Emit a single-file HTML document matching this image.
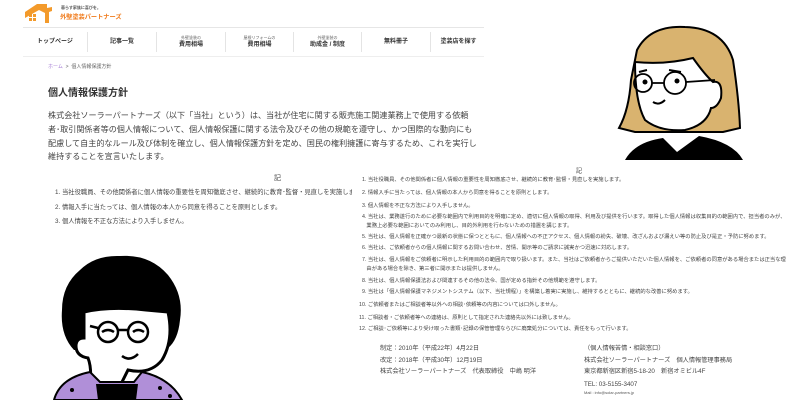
<!DOCTYPE html>
<html><head><meta charset="utf-8"><style>
*{margin:0;padding:0;box-sizing:border-box}
body{width:800px;height:400px;overflow:hidden;background:#fff;position:relative;font-family:"Liberation Sans","Noto Sans CJK JP",sans-serif;color:#333}
.a{position:absolute;white-space:nowrap}
.nav{position:absolute;top:30px;height:24px;text-align:center;font-size:6px;color:#333;font-weight:bold;display:flex;flex-direction:column;justify-content:center;line-height:9px}
.nav small{font-size:4px;font-weight:normal;color:#666;line-height:6px}
.div{position:absolute;top:32px;width:1px;height:20px;background:#e4e4e4}
.r{position:absolute;left:362px;font-size:5.3px;color:#444;white-space:nowrap;line-height:9px}
</style></head><body>
<svg class="a" style="left:25px;top:4px" width="28" height="19" viewBox="0 0 28 19">
<path d="M0 8 L12 0 L22 0 L22 4 L27 3 L27 7 L24 8 L24 19 L20 19 L20 9 L14 6 L0 14Z" fill="#f39a2b"/>
<rect x="4" y="10" width="3" height="3" fill="#f39a2b"/><rect x="8" y="10" width="3" height="3" fill="#f39a2b"/>
<rect x="4" y="14" width="3" height="3" fill="#f39a2b"/><rect x="8" y="14" width="3" height="3" fill="#f39a2b"/>
</svg>
<div class="a" style="left:61px;top:5px;font-size:4px;color:#555;font-weight:bold">暮らす家族に喜びを。</div>
<div class="a" style="left:60px;top:12px;font-size:6.2px;color:#f07a1a;font-weight:bold">外壁塗装パートナーズ</div>
<div class="a" style="left:23px;top:27px;width:461px;height:1px;background:#e6e6e6"></div>
<div class="a" style="left:23px;top:56px;width:461px;height:1px;background:#eee"></div>
<div class="nav" style="left:23px;width:64px">トップページ</div>
<div class="nav" style="left:88px;width:68px">記事一覧</div>
<div class="nav" style="left:157px;width:68px"><small>外壁塗装の</small>費用相場</div>
<div class="nav" style="left:226px;width:67px"><small>屋根リフォームの</small>費用相場</div>
<div class="nav" style="left:294px;width:67px"><small>外壁塗装の</small>助成金 / 制度</div>
<div class="nav" style="left:362px;width:68px">無料冊子</div>
<div class="nav" style="left:431px;width:55px">塗装店を探す</div>
<div class="div" style="left:87px"></div><div class="div" style="left:156px"></div><div class="div" style="left:225px"></div><div class="div" style="left:293px"></div><div class="div" style="left:361px"></div><div class="div" style="left:430px"></div>
<div class="a" style="left:48px;top:63px;font-size:5px;color:#666"><span style="color:#a77fd6">ホーム</span> &nbsp;&gt;&nbsp; 個人情報保護方針</div>
<div class="a" style="left:48px;top:84px;font-size:10px;font-weight:bold;color:#333">個人情報保護方針</div>
<div class="a" style="left:48px;top:109px;font-size:8.1px;line-height:13.8px;color:#444">株式会社ソーラーパートナーズ（以下「当社」という）は、当社が住宅に関する販売施工関連業務上で使用する依頼<br>者･取引関係者等の個人情報について、個人情報保護に関する法令及びその他の規範を遵守し、かつ国際的な動向にも<br>配慮して自主的なルール及び体制を確立し、個人情報保護方針を定め、国民の権利擁護に寄与するため、これを実行し<br>維持することを宣言いたします。</div>
<div class="a" style="left:274px;top:173px;font-size:7px;color:#444">記</div>
<div class="a" style="left:55px;top:186px;width:297px;overflow:hidden;font-size:6.3px;line-height:14.5px;color:#444">1. 当社役職員、その他関係者に個人情報の重要性を周知徹底させ、継続的に教育･監督・見直しを実施します。<br>2. 情報入手に当たっては、個人情報の本人から同意を得ることを原則とします。<br>3. 個人情報を不正な方法により入手しません。</div>
<div class="a" style="left:576px;top:166px;font-size:6px;color:#444">記</div>
<div class="r" style="top:176px">1. 当社役職員、その他関係者に個人情報の重要性を周知徹底させ、継続的に教育･監督・見直しを実施します。</div>
<div class="r" style="top:189px">2. 情報入手に当たっては、個人情報の本人から同意を得ることを原則とします。</div>
<div class="r" style="top:202px">3. 個人情報を不正な方法により入手しません。</div>
<div class="r" style="top:213px">4. 当社は、業務遂行のために必要な範囲内で利用目的を明確に定め、適切に個人情報の取得、利用及び提供を行います。取得した個人情報は収集目的の範囲内で、担当者のみが、<br>&nbsp;&nbsp;&nbsp;業務上必要な範囲においてのみ利用し、目的外利用を行わないための措置を講じます。</div>
<div class="r" style="top:233px">5. 当社は、個人情報を正確かつ最新の状態に保つとともに、個人情報への不正アクセス、個人情報の紛失、破壊、改ざんおよび漏えい等の防止及び是正・予防に努めます。</div>
<div class="r" style="top:244px">6. 当社は、ご依頼者からの個人情報に関するお問い合わせ、苦情、開示等のご請求に誠実かつ迅速に対応します。</div>
<div class="r" style="top:256px">7. 当社は、個人情報をご依頼者に明示した利用目的の範囲内で取り扱います。また、当社はご依頼者からご提供いただいた個人情報を、ご依頼者の同意がある場合または正当な理<br>&nbsp;&nbsp;&nbsp;由がある場合を除き、第三者に開示または提供しません。</div>
<div class="r" style="top:277px">8. 当社は、個人情報保護法および関連するその他の法令、国が定める指針その他規範を遵守します。</div>
<div class="r" style="top:288px">9. 当社は「個人情報保護マネジメントシステム（以下、当社規程）」を構築し着実に実施し、維持するとともに、継続的な改善に努めます。</div>
<div class="r" style="top:301px;left:359px">10. ご依頼者またはご相談者等以外への相談･依頼等の内容については口外しません。</div>
<div class="r" style="top:314px;left:359px">11. ご相談者・ご依頼者等への連絡は、原則として指定された連絡先以外には致しません。</div>
<div class="r" style="top:325px;left:359px">12. ご相談･ご依頼等により受け取った書類･記録の保管管理ならびに廃棄処分については、責任をもって行います。</div>
<div class="a" style="left:380px;top:343px;font-size:6.2px;line-height:11.6px;color:#444">制定：2010年（平成22年）4月22日<br>改定：2018年（平成30年）12月19日<br>株式会社ソーラーパートナーズ　代表取締役　中嶋 明洋</div>
<div class="a" style="left:584px;top:343px;font-size:6.2px;line-height:11.6px;color:#444">（個人情報苦情・相談窓口）<br>株式会社ソーラーパートナーズ　個人情報管理事務局<br>東京都新宿区新宿5-18-20　新宿オミビル4F<br><span style="line-height:13px">TEL: 03-5155-3407</span></div>
<div class="a" style="left:584px;top:390px;font-size:4px;color:#555">Mail : info@solar-partners.jp</div>
<svg class="a" style="left:50px;top:250px" width="140" height="150" viewBox="0 0 140 150">
<path d="M30 20 Q45 5 70 6 Q100 4 118 25 Q134 45 130 70 Q128 90 118 98 L24 100 Q10 85 12 60 Q12 35 30 20Z" fill="#000"/>
<path d="M34 62 Q60 56 96 60 L118 62 Q124 90 112 110 Q100 125 78 120 L70 136 L40 136 Q42 118 38 108 Q26 106 26 96 Q26 88 34 88Z" fill="#fff" stroke="#000" stroke-width="3"/>
<circle cx="58" cy="82" r="10" fill="none" stroke="#000" stroke-width="2.5"/>
<circle cx="88" cy="82" r="10" fill="none" stroke="#000" stroke-width="2.5"/>
<path d="M68 80 L78 80 M48 78 L40 76" stroke="#000" stroke-width="2.5"/>
<path d="M52 82 Q58 78 64 82 M83 82 Q88 78 94 82 M72 106 Q80 112 88 104" fill="none" stroke="#000" stroke-width="2.5"/>
<path d="M4 150 Q10 128 40 122 L50 132 L84 132 L92 122 Q120 128 132 150Z" fill="#b08fd8" stroke="#000" stroke-width="2"/>
<path d="M46 134 L88 134 L86 150 L48 150Z" fill="#000"/>
<circle cx="22" cy="140" r="2" fill="#000"/><circle cx="110" cy="138" r="2" fill="#000"/><circle cx="120" cy="146" r="2" fill="#000"/>
</svg>
<svg class="a" style="left:615px;top:20px" width="140" height="145" viewBox="0 0 140 145">
<path d="M22 30 Q35 5 70 7 Q108 8 118 40 Q124 80 125 108 L108 112 L20 112 L4 108 Q14 90 16 60Z" fill="#d9b36f" stroke="#000" stroke-width="2"/>
<path d="M20 42 Q50 45 78 38 Q90 55 98 62 Q108 60 106 78 Q102 88 96 88 Q92 105 70 110 Q45 112 30 100 Q20 82 20 42Z" fill="#fff" stroke="#000" stroke-width="2"/>
<circle cx="28" cy="63" r="9" fill="none" stroke="#000" stroke-width="1.8"/>
<circle cx="60" cy="63" r="11" fill="none" stroke="#000" stroke-width="1.8"/>
<path d="M37 63 L49 63 M71 62 L100 60" stroke="#000" stroke-width="1.8"/>
<circle cx="30" cy="62" r="2.5" fill="#000"/><circle cx="62" cy="61" r="2.5" fill="#000"/>
<path d="M38 82 Q44 86 50 80 M24 52 L32 50 M54 50 L66 52" fill="none" stroke="#000" stroke-width="2"/>
<path d="M10 140 Q20 122 48 118 L62 132 L84 116 Q118 122 128 140Z" fill="#000"/>
</svg>
</body></html>
